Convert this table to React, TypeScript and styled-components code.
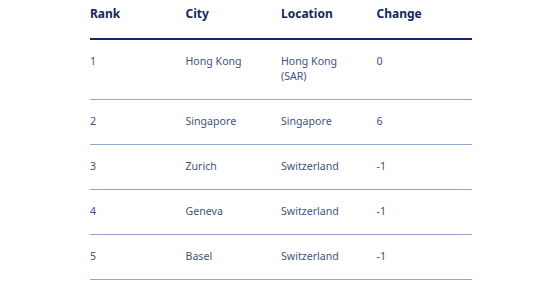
import React, { FC } from 'react'
import styled, { createGlobalStyle } from 'styled-components'

const GlobalStyle = createGlobalStyle`
  body {
    margin: 0;
    background: #ffffff;
    font-family: 'Noto Sans', 'Open Sans', sans-serif;
  }
`

const Wrapper = styled.div`
  width: 382px;
  margin: 0 auto;
  padding-left: 2px;
`

const Table = styled.table`
  width: 100%;
  border-collapse: collapse;
  table-layout: fixed;
`

const HeadCell = styled.th`
  text-align: left;
  font-size: 12px;
  font-weight: 700;
  line-height: 22px;
  color: #14285a;
  padding: 3px 16px 13px 0;
  border-bottom: 2px solid #102c6a;
`

const Row = styled.tr`
  border-bottom: 1px solid #94a8cf;
`

const Cell = styled.td`
  vertical-align: top;
  font-size: 10.6px;
  line-height: 15px;
  color: #3e5280;
  padding: 14px 16px 15px 0;
`

type Ranking = {
  rank: number
  city: string
  location: string
  change: string
}

const rankings: Ranking[] = [
  { rank: 1, city: 'Hong Kong', location: 'Hong Kong (SAR)', change: '0' },
  { rank: 2, city: 'Singapore', location: 'Singapore', change: '6' },
  { rank: 3, city: 'Zurich', location: 'Switzerland', change: '-1' },
  { rank: 4, city: 'Geneva', location: 'Switzerland', change: '-1' },
  { rank: 5, city: 'Basel', location: 'Switzerland', change: '-1' }
]

const App: FC = () => (
  <>
    <GlobalStyle />
    <Wrapper>
      <Table>
        <thead>
          <tr>
            <HeadCell>Rank</HeadCell>
            <HeadCell>City</HeadCell>
            <HeadCell>Location</HeadCell>
            <HeadCell>Change</HeadCell>
          </tr>
        </thead>
        <tbody>
          {rankings.map(({ rank, city, location, change }) => (
            <Row key={rank}>
              <Cell>{rank}</Cell>
              <Cell>{city}</Cell>
              <Cell>{location}</Cell>
              <Cell>{change}</Cell>
            </Row>
          ))}
        </tbody>
      </Table>
    </Wrapper>
  </>
)

export default App
